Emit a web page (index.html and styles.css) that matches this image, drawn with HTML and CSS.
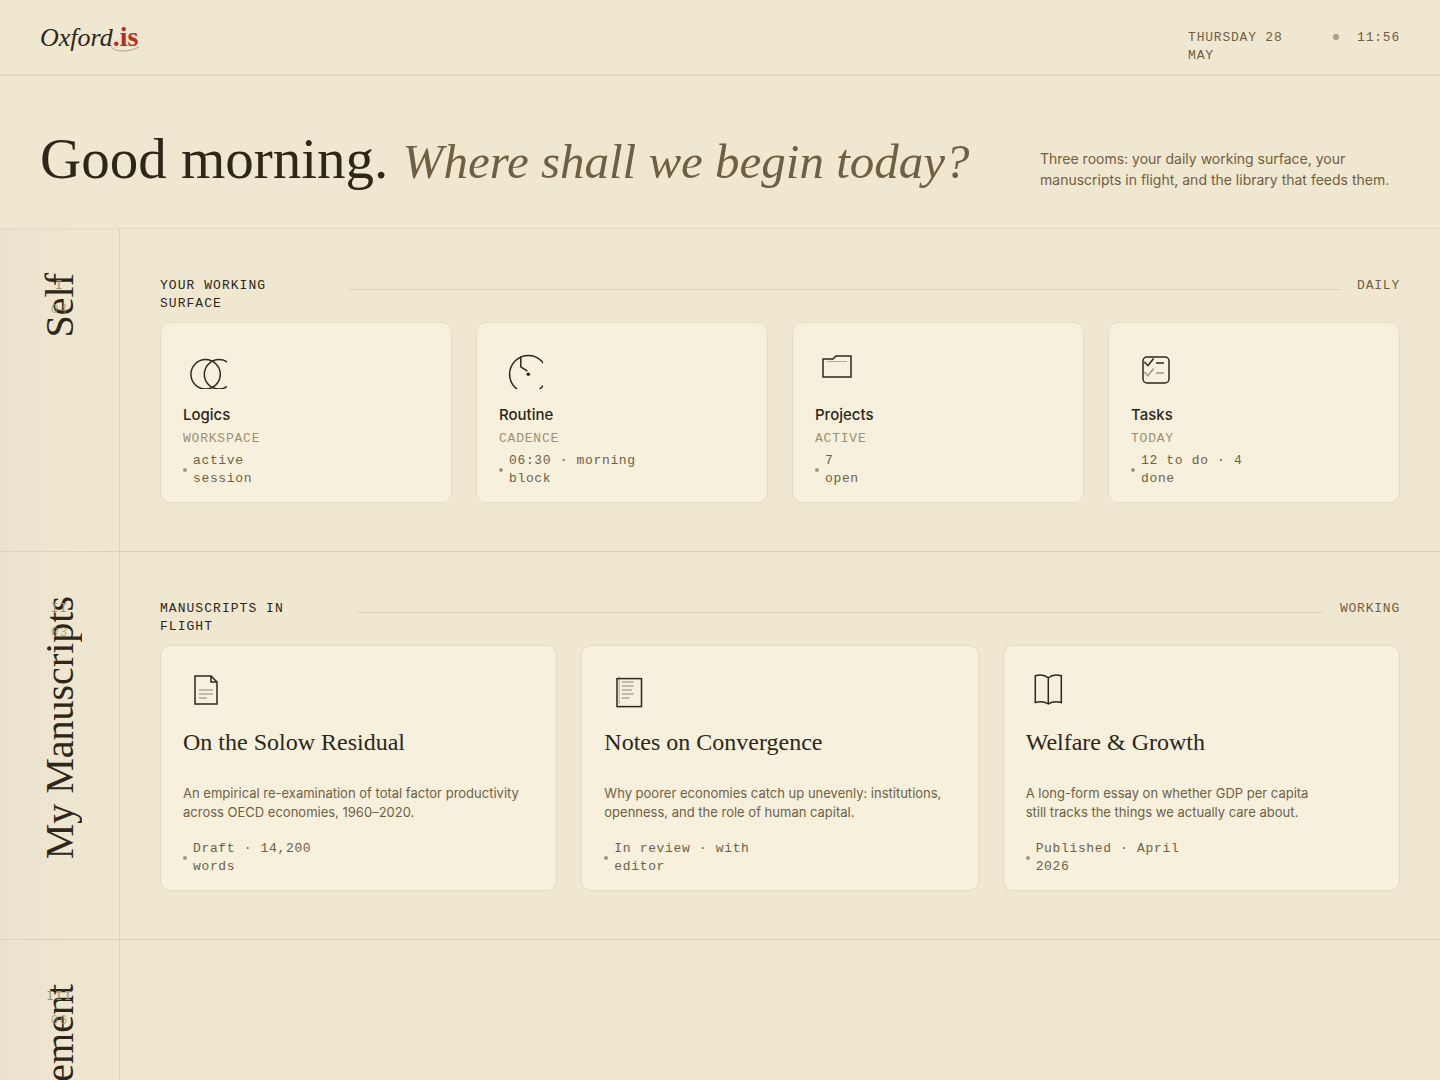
FILE: index.html
```
<!DOCTYPE html>
<html lang="en">
<head>
    <meta charset="UTF-8">
    <meta name="viewport" content="width=device-width, initial-scale=1.0">
    <title>Oxford.is</title>
    <link rel="stylesheet" href="styles.css">
</head>
<body>

    <header class="topbar">
        <a class="logo" href="#">Oxford<span class="logo-tld">.is<svg class="logo-swash" viewBox="0 0 30 6" aria-hidden="true"><path d="M1 1C4 4 8 5 13 5C20 5 25 3 29 1"/></svg></span></a>
        <div class="meta">
            <span class="meta-date">Thursday 28<br>May</span>
            <span class="meta-dot"></span>
            <time>11:56</time>
        </div>
    </header>

    <section class="hero">
        <h1>Good morning. <em>Where shall we begin today?</em></h1>
        <p>Three rooms: your daily working surface, your manuscripts in flight, and the library that feeds them.</p>
    </section>

    <main>
        <!-- Self -->
        <section class="room room-self">
            <div class="spine">
                <h2>Self</h2>
                <div class="spine-marks"><span>I</span><span class="count">04</span></div>
            </div>
            <div class="room-body">
                <div class="row-head">
                    <h3>Your working<br>surface</h3>
                    <span class="rule"></span>
                    <span class="row-tag">Daily</span>
                </div>
                <div class="cards cards-four">
                    <a class="card" href="#">
                        <svg class="icon" viewBox="0 0 44 44" aria-hidden="true">
                            <circle cx="22.6" cy="29.3" r="14.7"/>
                            <circle cx="36" cy="29.3" r="14.7"/>
                        </svg>
                        <h4>Logics</h4>
                        <span class="kind">Workspace</span>
                        <span class="status"><span>active<br>session</span></span>
                    </a>
                    <a class="card" href="#">
                        <svg class="icon" viewBox="0 0 44 44" aria-hidden="true">
                            <circle cx="29.3" cy="29.3" r="18.7"/>
                            <path d="M21.8 11.6V21.8L28.4 26.2"/>
                            <circle class="solid" cx="29.3" cy="29.3" r="1.8"/>
                        </svg>
                        <h4>Routine</h4>
                        <span class="kind">Cadence</span>
                        <span class="status"><span>06:30 · morning<br>block</span></span>
                    </a>
                    <a class="card" href="#">
                        <svg class="icon" viewBox="0 0 44 44" aria-hidden="true">
                            <path d="M8 14H18L21 11H36V32H8Z"/>
                            <path class="thin" d="M12 16.5H32"/>
                        </svg>
                        <h4>Projects</h4>
                        <span class="kind">Active</span>
                        <span class="status"><span>7<br>open</span></span>
                    </a>
                    <a class="card" href="#">
                        <svg class="icon" viewBox="0 0 44 44" aria-hidden="true">
                            <rect x="12" y="12" width="26" height="26" rx="4"/>
                            <path d="M13.3 17L17 20.7L22.6 13.5M25 18H33"/>
                            <path class="half" d="M13.3 27L17 30.7L22.6 23.5M25 28H33"/>
                        </svg>
                        <h4>Tasks</h4>
                        <span class="kind">Today</span>
                        <span class="status"><span>12 to do · 4<br>done</span></span>
                    </a>
                </div>
            </div>
        </section>

        <!-- My Manuscripts -->
        <section class="room room-manuscripts">
            <div class="spine">
                <h2>My Manuscripts</h2>
                <div class="spine-marks"><span>II</span><span class="count">03</span></div>
            </div>
            <div class="room-body">
                <div class="row-head">
                    <h3>Manuscripts in<br>flight</h3>
                    <span class="rule"></span>
                    <span class="row-tag">Working</span>
                </div>
                <div class="cards cards-three">
                    <a class="card card-paper" href="#">
                        <svg class="icon" viewBox="0 0 44 44" aria-hidden="true">
                            <path d="M12 8H28L34 14V36H12ZM28 8V14H34"/>
                            <path class="faint" d="M16 22H30M16 26H30M16 30H24"/>
                        </svg>
                        <h4>On the Solow Residual</h4>
                        <p>An empirical re-examination of total factor productivity across OECD economies, 1960–2020.</p>
                        <span class="status"><span>Draft · 14,200<br>words</span></span>
                    </a>
                    <a class="card card-paper" href="#">
                        <svg class="icon" viewBox="0 0 44 44" aria-hidden="true">
                            <rect x="13" y="10.6" width="24.5" height="28"/>
                            <path class="thin" d="M15.2 8V36"/>
                            <path class="faint" d="M17.7 14H29.7M17.7 18H29.7M17.7 22H27.7M17.7 26H29.7M17.7 30H25.7"/>
                        </svg>
                        <h4>Notes on Convergence</h4>
                        <p>Why poorer economies catch up unevenly: institutions, openness, and the role of human capital.</p>
                        <span class="status"><span>In review · with<br>editor</span></span>
                    </a>
                    <a class="card card-paper" href="#">
                        <svg class="icon" viewBox="0 0 44 44" aria-hidden="true">
                            <path d="M22.3 9.8C19 7 14 6.4 9.3 7.8V34.5C14 33.3 19 33.8 22.3 36C25.6 33.8 30.6 33.3 35.3 34.5V7.8C30.6 6.4 25.6 7 22.3 9.8ZM22.3 9.8V36.5"/>
                        </svg>
                        <h4>Welfare &amp; Growth</h4>
                        <p>A long-form essay on whether GDP per capita<br>still tracks the things we actually care about.</p>
                        <span class="status"><span>Published · April<br>2026</span></span>
                    </a>
                </div>
            </div>
        </section>

        <!-- Management -->
        <section class="room">
            <div class="spine">
                <h2>Management</h2>
                <div class="spine-marks"><span>III</span><span class="count">06</span></div>
            </div>
            <div class="room-body"></div>
        </section>
    </main>

</body>
</html>
```

FILE: styles.css
```
:root {
    --paper: #efe7d0;
    --card: #f7f0dd;
    --ink: #2e2618;
    --muted: #6f6043;
    --faint: #a09070;
    --line: #dcd3bb;
    --line-soft: #e4dbc5;
    --red: #b03022;
    --serif: "Liberation Serif", serif;
    --sans: Inter, sans-serif;
    --mono: "Liberation Mono", monospace;
}
* {
    box-sizing: border-box;
}
body {
    margin: 0;
    background-color: var(--paper);
    color: var(--ink);
    font-family: var(--sans);
}
h1, h2, h3, h4, p {
    margin: 0;
    font-weight: 400;
}
a {
    color: inherit;
    text-decoration: none;
}

/* Top bar */
.topbar {
    display: flex;
    justify-content: space-between;
    align-items: flex-start;
    height: 76px;
    padding: 22px 40px 0;
    border-bottom: 2px solid var(--line-soft);
}
.logo {
    font-family: var(--serif);
    font-size: 26px;
    font-style: italic;
    line-height: 30px;
}
.logo-tld {
    position: relative;
    color: var(--red);
    font-size: 28px;
    font-style: normal;
    font-weight: 700;
}
.logo-swash {
    position: absolute;
    left: -3px;
    bottom: 0;
    width: 30px;
    height: 6px;
    fill: none;
    stroke: #8a5a3c;
    stroke-width: 1;
    opacity: 0.5;
}
.meta {
    display: flex;
    gap: 18px;
    padding-top: 7px;
    color: var(--muted);
    font-family: var(--mono);
    font-size: 13px;
    line-height: 18px;
    letter-spacing: 0.06em;
    text-transform: uppercase;
}
.meta-date {
    width: 127px;
}
.meta-dot {
    width: 6px;
    height: 6px;
    margin-top: 5px;
    border-radius: 50%;
    background-color: #ab9f86;
}

/* Greeting */
.hero {
    display: flex;
    justify-content: space-between;
    align-items: flex-end;
    gap: 40px;
    padding: 52px 40px 38px;
    border-bottom: 1px solid var(--line-soft);
}
.hero h1 {
    font-family: var(--serif);
    font-size: 57px;
    line-height: 62px;
}
.hero em {
    color: var(--muted);
    font-size: 49px;
    line-height: 49px;
}
.hero p {
    flex: 0 0 360px;
    color: var(--muted);
    font-size: 14px;
    line-height: 21px;
}

/* Rooms */
.room {
    display: grid;
    grid-template-columns: 120px 1fr;
    border-bottom: 1px solid var(--line);
}
.spine {
    position: relative;
    display: flex;
    justify-content: center;
    padding-top: 44px;
    border-right: 1px solid var(--line);
    background: linear-gradient(90deg, #eae2cd, #eee6cf 60%, var(--paper));
}
.spine h2 {
    height: max-content;
    font-family: var(--serif);
    font-size: 40px;
    line-height: 44px;
    white-space: nowrap;
    writing-mode: vertical-rl;
    transform: rotate(180deg);
}
.spine-marks {
    position: absolute;
    top: 48px;
    left: 0;
    right: 0;
    display: flex;
    flex-direction: column;
    gap: 6px;
    color: var(--faint);
    font-family: var(--mono);
    font-size: 13px;
    line-height: 18px;
    letter-spacing: 0.08em;
    text-align: center;
}
.count {
    opacity: 0.7;
}
.room-body {
    padding: 48px 40px;
}
.row-head {
    display: flex;
    gap: 16px;
    margin-bottom: 9px;
    font-family: var(--mono);
    font-size: 13px;
    line-height: 18px;
    text-transform: uppercase;
}
.row-head h3 {
    font-size: 13px;
    letter-spacing: 0.08em;
}
.room-self h3 {
    width: 173px;
}
.room-manuscripts h3 {
    width: 181px;
}
.rule {
    flex: 1;
    height: 1px;
    margin-top: 12px;
    background-color: var(--line);
}
.row-tag {
    color: var(--muted);
    letter-spacing: 0.06em;
}

/* Cards */
.cards {
    display: grid;
    gap: 24px;
}
.cards-four {
    grid-template-columns: repeat(4, 1fr);
}
.cards-three {
    grid-template-columns: repeat(3, 1fr);
}
.card {
    display: flex;
    flex-direction: column;
    padding: 22px 22px 14px;
    border: 1px solid #e5dcc6;
    border-radius: 10px;
    background-color: var(--card);
}
.card:hover {
    border-color: var(--faint);
}
.icon {
    width: 44px;
    height: 44px;
    overflow: hidden;
    fill: none;
    stroke: var(--ink);
    stroke-width: 1.5;
}
.icon .thin {
    stroke-width: 1;
    opacity: 0.35;
}
.icon .faint {
    opacity: 0.35;
}
.icon .half {
    opacity: 0.45;
}
.icon .solid {
    fill: var(--ink);
    stroke: none;
}
.card h4 {
    margin-top: 15px;
    font-size: 15px;
    font-weight: 500;
    line-height: 22px;
}
.kind {
    margin: 4px 0;
    color: var(--faint);
    font-family: var(--mono);
    font-size: 13px;
    line-height: 18px;
    letter-spacing: 0.06em;
    text-transform: uppercase;
}
.status {
    display: flex;
    align-items: center;
    gap: 6px;
    color: var(--muted);
    font-family: var(--mono);
    font-size: 13px;
    line-height: 18px;
    letter-spacing: 0.05em;
}
.status::before {
    content: "";
    width: 4px;
    height: 4px;
    border-radius: 50%;
    background-color: #a4977c;
}
.card-paper h4 {
    font-family: var(--serif);
    font-size: 24px;
    font-weight: 400;
    line-height: 30px;
}
.card-paper p {
    max-width: 340px;
    margin: 27px 0 18px;
    color: var(--muted);
    font-size: 13px;
    line-height: 19px;
}
```
